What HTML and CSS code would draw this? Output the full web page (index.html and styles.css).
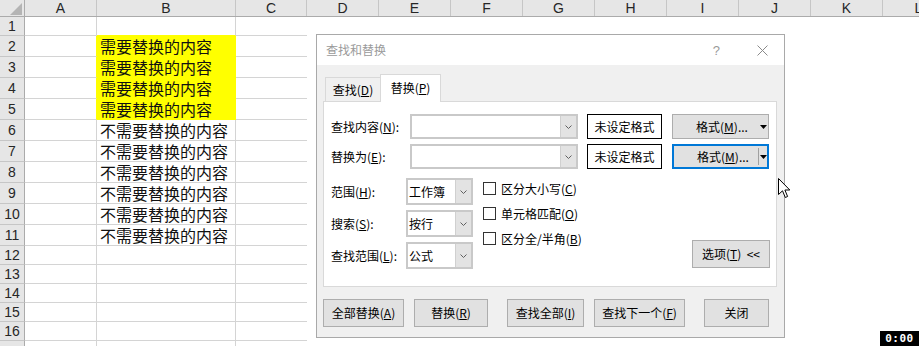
FILE: index.html
```html
<!DOCTYPE html>
<html lang="zh-CN">
<head>
  <meta charset="UTF-8" />
  <title>查找和替换</title>
  <link rel="stylesheet" href="styles.css">
</head>
<body>
  <div class="sheet">
    <div class="colheads">
      <div class="corner"><svg width="12" height="12" viewBox="0 0 12 12"><polygon points="12,0 12,12 0,12" fill="#b4b4b4"/></svg></div>
      <div class="ch col-a">A</div>
      <div class="ch col-b">B</div>
      <div class="ch col-c">C</div>
      <div class="ch">D</div>
      <div class="ch">E</div>
      <div class="ch">F</div>
      <div class="ch">G</div>
      <div class="ch">H</div>
      <div class="ch">I</div>
      <div class="ch">J</div>
      <div class="ch">K</div>
      <div class="ch">L</div>
    </div>

    <div class="row first"><div class="rh">1</div><div class="cell col-a"></div><div class="cell col-b hl-edge"></div><div class="cell col-c"></div></div>
    <div class="row"><div class="rh">2</div><div class="cell col-a hl-next"></div><div class="cell col-b hl"><span class="txt">需要替换的内容</span></div><div class="cell col-c"></div></div>
    <div class="row"><div class="rh">3</div><div class="cell col-a hl-next"></div><div class="cell col-b hl"><span class="txt">需要替换的内容</span></div><div class="cell col-c"></div></div>
    <div class="row"><div class="rh">4</div><div class="cell col-a hl-next"></div><div class="cell col-b hl"><span class="txt">需要替换的内容</span></div><div class="cell col-c"></div></div>
    <div class="row"><div class="rh">5</div><div class="cell col-a hl-next"></div><div class="cell col-b hl"><span class="txt">需要替换的内容</span></div><div class="cell col-c"></div></div>
    <div class="row"><div class="rh">6</div><div class="cell col-a"></div><div class="cell col-b"><span class="txt">不需要替换的内容</span></div><div class="cell col-c"></div></div>
    <div class="row"><div class="rh">7</div><div class="cell col-a"></div><div class="cell col-b"><span class="txt">不需要替换的内容</span></div><div class="cell col-c"></div></div>
    <div class="row"><div class="rh">8</div><div class="cell col-a"></div><div class="cell col-b"><span class="txt">不需要替换的内容</span></div><div class="cell col-c"></div></div>
    <div class="row"><div class="rh">9</div><div class="cell col-a"></div><div class="cell col-b"><span class="txt">不需要替换的内容</span></div><div class="cell col-c"></div></div>
    <div class="row"><div class="rh">10</div><div class="cell col-a"></div><div class="cell col-b"><span class="txt">不需要替换的内容</span></div><div class="cell col-c"></div></div>
    <div class="row"><div class="rh">11</div><div class="cell col-a"></div><div class="cell col-b"><span class="txt">不需要替换的内容</span></div><div class="cell col-c"></div></div>
    <div class="row short"><div class="rh">12</div><div class="cell col-a"></div><div class="cell col-b"></div><div class="cell col-c"></div></div>
    <div class="row short"><div class="rh">13</div><div class="cell col-a"></div><div class="cell col-b"></div><div class="cell col-c"></div></div>
    <div class="row short"><div class="rh">14</div><div class="cell col-a"></div><div class="cell col-b"></div><div class="cell col-c"></div></div>
    <div class="row short"><div class="rh">15</div><div class="cell col-a"></div><div class="cell col-b"></div><div class="cell col-c"></div></div>
    <div class="row short"><div class="rh">16</div><div class="cell col-a"></div><div class="cell col-b"></div><div class="cell col-c"></div></div>
    <div class="row short"><div class="rh"></div><div class="cell col-a"></div><div class="cell col-b"></div><div class="cell col-c"></div></div>

    <!-- find & replace window over the sheet -->
    <div class="dialog">
      <div class="titlebar">
        <span class="title">查找和替换</span>
        <span class="help">?</span>
        <svg class="close" width="11" height="11" viewBox="0 0 11 11"><path d="M0.5 0.5 L10.5 10.5 M10.5 0.5 L0.5 10.5" stroke="#8a8a8a" stroke-width="1"/></svg>
      </div>
      <div class="dlgbody">
        <div class="tabs">
          <div class="tab">查找(<u>D</u>)</div>
          <div class="tab active">替换(<u>P</u>)</div>
        </div>
        <div class="panel">
          <div class="frow">
            <span class="flabel">查找内容(<u>N</u>):</span>
            <div class="combo"><span class="drop"><svg width="7" height="4" viewBox="0 0 7 4"><polyline points="0.5,0.5 3.5,3.5 6.5,0.5" fill="none" stroke="#606060"/></svg></span></div>
            <div class="preview">未设定格式</div>
            <div class="fmt-btn"><span class="fmt-text">格式(<u>M</u>)...</span><span class="fmt-sep"></span><span class="fmt-arrow"><svg width="7" height="4" viewBox="0 0 7 4"><polygon points="0,0 7,0 3.5,4" fill="#000"/></svg></span></div>
          </div>
          <div class="frow">
            <span class="flabel">替换为(<u>E</u>):</span>
            <div class="combo"><span class="drop"><svg width="7" height="4" viewBox="0 0 7 4"><polyline points="0.5,0.5 3.5,3.5 6.5,0.5" fill="none" stroke="#606060"/></svg></span></div>
            <div class="preview">未设定格式</div>
            <div class="fmt-btn focused"><span class="fmt-text">格式(<u>M</u>)...</span><span class="fmt-sep"></span><span class="fmt-arrow"><svg width="7" height="4" viewBox="0 0 7 4"><polygon points="0,0 7,0 3.5,4" fill="#000"/></svg></span></div>
          </div>

          <div class="opts">
            <div class="fields">
              <div class="field">
                <span class="olabel">范围(<u>H</u>):</span>
                <div class="select"><span class="val">工作簿</span><span class="drop"><svg width="7" height="4" viewBox="0 0 7 4"><polyline points="0.5,0.5 3.5,3.5 6.5,0.5" fill="none" stroke="#606060"/></svg></span></div>
              </div>
              <div class="field">
                <span class="olabel">搜索(<u>S</u>):</span>
                <div class="select"><span class="val">按行</span><span class="drop"><svg width="7" height="4" viewBox="0 0 7 4"><polyline points="0.5,0.5 3.5,3.5 6.5,0.5" fill="none" stroke="#606060"/></svg></span></div>
              </div>
              <div class="field">
                <span class="olabel">查找范围(<u>L</u>):</span>
                <div class="select"><span class="val">公式</span><span class="drop"><svg width="7" height="4" viewBox="0 0 7 4"><polyline points="0.5,0.5 3.5,3.5 6.5,0.5" fill="none" stroke="#606060"/></svg></span></div>
              </div>
            </div>
            <div class="checks">
              <div class="check"><span class="box"></span>区分大小写(<u>C</u>)</div>
              <div class="check"><span class="box"></span>单元格匹配(<u>O</u>)</div>
              <div class="check"><span class="box"></span>区分全/半角(<u>B</u>)</div>
            </div>
            <div class="btn opt-btn">选项(<u>T</u>)&nbsp; &lt;&lt;</div>
          </div>
        </div>

        <div class="actions">
          <div class="btn act-all">全部替换(<u>A</u>)</div>
          <div class="btn act-one">替换(<u>R</u>)</div>
          <div class="btn act-findall">查找全部(<u>I</u>)</div>
          <div class="btn act-next">查找下一个(<u>F</u>)</div>
          <div class="btn act-close">关闭</div>
        </div>
      </div>
    </div>

    <svg class="pointer" width="13" height="21" viewBox="0 0 13 21"><path d="M0.5 0.5 V16.5 L4.5 12.8 L7.3 19.5 L9.6 18.5 L6.9 12 H11.8 Z" fill="#fff" stroke="#000" stroke-width="1" stroke-linejoin="miter"/></svg>

    <div class="timer">0:00</div>
  </div>
</body>
</html>
```

FILE: styles.css
```css
body {
  margin: 0;
  background: #fff;
}

.sheet {
  position: relative;
  width: 919px;
  height: 346px;
  overflow: hidden;
  background: #fff;
  font-family: "Noto Sans CJK SC", sans-serif;
  color: #000;
}

/* Column headers */
.colheads {
  display: flex;
  height: 17px;
  box-sizing: border-box;
  background: #e6e6e6;
  border-bottom: 1px solid #ababab;
}

.corner {
  width: 25px;
  flex: none;
  box-sizing: border-box;
  border-right: 1px solid #ababab;
  display: flex;
  align-items: flex-end;
  justify-content: flex-end;
  padding: 0 2px 1px 0;
}

.corner svg {
  display: block;
}

.ch {
  width: 72px;
  flex: none;
  box-sizing: border-box;
  border-right: 1px solid #c6c6c6;
  text-align: center;
  font: 14px/16px "Liberation Sans", sans-serif;
  color: #262626;
}

.col-a { width: 72px; }
.col-b { width: 139px; }
.col-c { width: 71px; }

/* Rows */
.row {
  display: flex;
  height: 21px;
}

.row.first,
.row.short {
  height: 19px;
}

.rh {
  width: 25px;
  flex: none;
  box-sizing: border-box;
  background: #e6e6e6;
  border-right: 1px solid #ababab;
  border-bottom: 1px solid #c6c6c6;
  font: 14px/18px "Liberation Sans", sans-serif;
  color: #262626;
  display: flex;
  align-items: center;
  justify-content: center;
}

.cell {
  flex: none;
  box-sizing: border-box;
  border-bottom: 1px solid #d4d4d4;
  border-right: 1px solid #d4d4d4;
  padding-left: 3px;
  white-space: nowrap;
  display: flex;
  align-items: flex-end;
}

.txt {
  font-size: 16px;
  line-height: 19px;
  color: #111;
}

.cell.col-c {
  border-right: none;
}

.cell.hl {
  background: #ffff00;
  border-color: #ffff00;
}

.cell.hl-edge {
  border-bottom-color: #ffff00;
}

.cell.hl-next {
  border-right-color: #ffff00;
}

/* Dialog window */
.dialog {
  position: absolute;
  left: 316px;
  top: 34px;
  width: 469px;
  height: 304px;
  box-sizing: border-box;
  border: 1px solid #a9a9a9;
  background: #f0f0f0;
  font-size: 12px;
  line-height: 16px;
}

.titlebar {
  height: 30px;
  background: #fff;
  display: flex;
  align-items: center;
  padding-left: 9px;
}

.title {
  color: #9a9a9a;
}

.help {
  margin-left: auto;
  font: 13px "Liberation Sans", sans-serif;
  color: #9a9a9a;
}

.close {
  margin: 0 16px 0 37px;
  display: block;
}

.dlgbody {
  padding: 0 6px;
}

.tabs {
  height: 36px;
  display: flex;
  align-items: flex-end;
}

.tab {
  box-sizing: border-box;
  height: 24px;
  width: 55px;
  margin-left: 2px;
  border: 1px solid #d9d9d9;
  border-right: none;
  border-bottom: none;
  display: flex;
  align-items: center;
  justify-content: center;
}

.tab.active {
  position: relative;
  z-index: 1;
  height: 28px;
  width: 61px;
  margin-left: 0;
  margin-bottom: -1px;
  border-right: 1px solid #d9d9d9;
  background: #fff;
  padding-bottom: 2px;
}

.panel {
  box-sizing: border-box;
  width: 454px;
  height: 186px;
  background: #fff;
  border: 1px solid #d9d9d9;
  padding: 12px 0 0 7px;
}

.frow {
  display: flex;
  align-items: center;
  height: 25px;
  margin-bottom: 5px;
}

.flabel {
  width: 79px;
}

.combo {
  width: 168px;
  height: 25px;
  box-sizing: border-box;
  border: 2px solid #c9c9c9;
  background: #fff;
  display: flex;
  justify-content: flex-end;
}

.drop {
  width: 15px;
  background: #e3e3e3;
  border-left: 1px solid #d0d0d0;
  display: flex;
  align-items: center;
  justify-content: center;
}

.drop svg {
  display: block;
}

.preview {
  margin-left: 9px;
  width: 75px;
  height: 25px;
  box-sizing: border-box;
  border: 1px solid #000;
  display: flex;
  align-items: center;
  justify-content: center;
}

.fmt-btn {
  margin-left: 10px;
  width: 97px;
  height: 25px;
  box-sizing: border-box;
  background: #e1e1e1;
  border: 1px solid #adadad;
  display: flex;
  align-items: center;
}

.fmt-btn.focused {
  border: 2px solid #0078d7;
}

.fmt-text {
  width: 84px;
  box-sizing: border-box;
  padding-left: 14px;
  text-align: center;
}

.fmt-sep {
  width: 1px;
  height: 17px;
}

.fmt-btn.focused .fmt-sep {
  background: #a0a0a0;
}

.fmt-arrow {
  flex: 1;
  display: flex;
  justify-content: center;
}

.fmt-arrow svg {
  display: block;
}

/* Search options */
.opts {
  display: flex;
  margin-top: 9px;
}

.fields {
  display: flex;
  flex-direction: column;
  gap: 5px;
}

.field {
  display: flex;
  align-items: center;
}

.olabel {
  width: 75px;
}

.select {
  width: 67px;
  height: 27px;
  box-sizing: border-box;
  border: 2px solid #c9c9c9;
  display: flex;
}

.select .val {
  flex: 1;
  padding-left: 1px;
  display: flex;
  align-items: center;
}

.checks {
  margin: -2px 0 0 10px;
  display: flex;
  flex-direction: column;
}

.check {
  height: 25px;
  display: flex;
  align-items: center;
}

.box {
  width: 13px;
  height: 13px;
  box-sizing: border-box;
  border: 1px solid #333;
  background: #fff;
  margin-right: 5px;
}

.btn {
  box-sizing: border-box;
  height: 28px;
  background: #e1e1e1;
  border: 1px solid #adadad;
  display: flex;
  align-items: center;
  justify-content: center;
  white-space: nowrap;
}

.opt-btn {
  width: 78px;
  margin-left: auto;
  margin-right: 6px;
  align-self: flex-end;
  margin-bottom: 1px;
}

/* Bottom buttons */
.actions {
  display: flex;
  margin-top: 12px;
}

.act-all { width: 81px; }
.act-one { width: 74px; margin-left: 10px; }
.act-findall { width: 77px; margin-left: 19px; }
.act-next { width: 91px; margin-left: 10px; }
.act-close { width: 65px; margin-left: 19px; }

.pointer {
  position: absolute;
  left: 778px;
  top: 178px;
  display: block;
}

.timer {
  position: absolute;
  right: 0;
  bottom: 0;
  width: 39px;
  height: 15px;
  background: #000;
  color: #fff;
  font: bold 11px/15px "DejaVu Sans Mono", monospace;
  text-align: center;
  letter-spacing: 0.5px;
}
```
